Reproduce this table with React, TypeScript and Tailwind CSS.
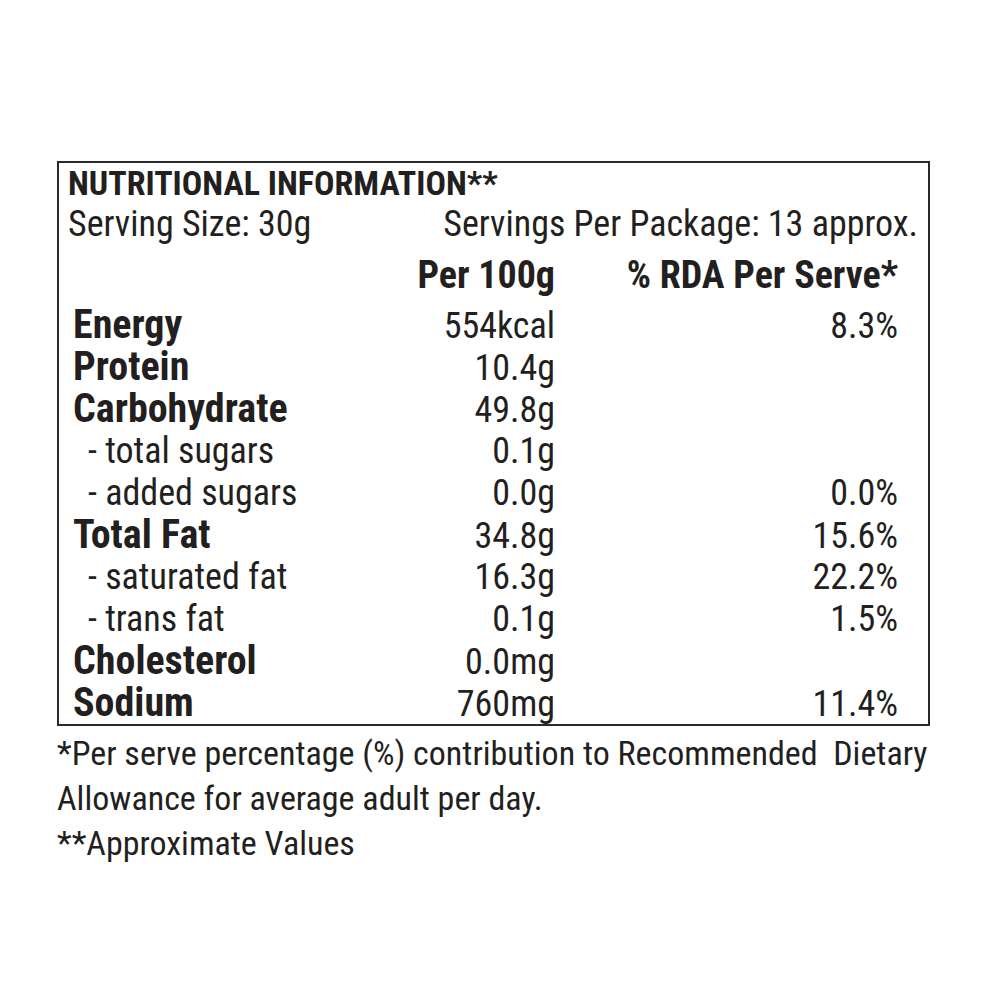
type Row = { label: string; sub?: boolean; value: string; rda?: string };

const rows: Row[] = [
  { label: "Energy", value: "554kcal", rda: "8.3%" },
  { label: "Protein", value: "10.4g" },
  { label: "Carbohydrate", value: "49.8g" },
  { label: "- total sugars", sub: true, value: "0.1g" },
  { label: "- added sugars", sub: true, value: "0.0g", rda: "0.0%" },
  { label: "Total Fat", value: "34.8g", rda: "15.6%" },
  { label: "- saturated fat", sub: true, value: "16.3g", rda: "22.2%" },
  { label: "- trans fat", sub: true, value: "0.1g", rda: "1.5%" },
  { label: "Cholesterol", value: "0.0mg" },
  { label: "Sodium", value: "760mg", rda: "11.4%" },
];

export default function App() {
  return (
    <div className="w-[1000px] h-[1000px] bg-white text-[#231f20] font-['Roboto_Condensed',sans-serif] overflow-hidden">
      <div className="pt-[161px] pl-[57px]">
        <div className="w-[873px] h-[565px] border-2 border-[#2a2a2a] flex flex-col">
          <div className="pl-[9px] pt-[1px] text-[34px] leading-[39px] font-bold">
            NUTRITIONAL INFORMATION**
          </div>
          <div className="flex justify-between pl-[9px] pr-[10px] text-[36px] leading-[42px]">
            <span>Serving Size: 30g</span>
            <span>Servings Per Package: 13 approx.</span>
          </div>
          <div className="mt-[9px] grid grid-cols-[327px_155px_343px] pl-[14px] text-[38px] leading-[42px] font-bold">
            <span />
            <span className="text-right whitespace-nowrap">Per 100g</span>
            <span className="text-right whitespace-nowrap">% RDA Per Serve*</span>
          </div>
          <div className="mt-[8px] flex flex-col">
            {rows.map((r) => (
              <div key={r.label} className="grid grid-cols-[327px_155px_343px] pl-[14px] leading-[42px] h-[42px] items-baseline">
                <span
                  className={
                    r.sub
                      ? "pl-[15px] text-[36px] whitespace-nowrap"
                      : "text-[40px] font-bold whitespace-nowrap"
                  }
                >
                  {r.label}
                </span>
                <span className="text-right text-[36px] whitespace-nowrap">{r.value}</span>
                <span className="text-right text-[36px] whitespace-nowrap">{r.rda ?? ""}</span>
              </div>
            ))}
          </div>
        </div>
        <div className="mt-[5px] text-[34px] leading-[45px]">
          <div className="whitespace-nowrap">*Per serve percentage (%) contribution to Recommended&nbsp; Dietary</div>
          <div>Allowance for average adult per day.</div>
          <div>**Approximate Values</div>
        </div>
      </div>
    </div>
  );
}
